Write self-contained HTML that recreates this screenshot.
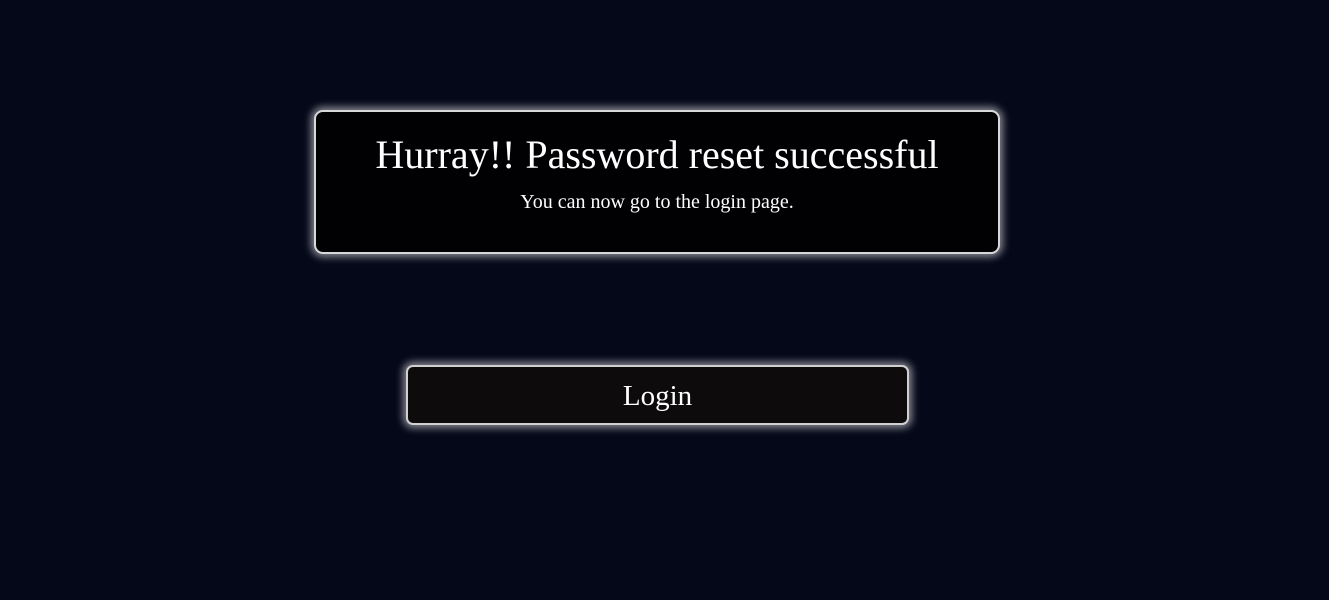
<!DOCTYPE html>
<html><head><style>
html,body{margin:0;padding:0;}
body{width:1329px;height:600px;background:#050818;font-family:"Liberation Serif",serif;color:#fff;position:relative;overflow:hidden;}
.box{position:absolute;left:314px;top:110px;width:682px;height:140px;background:#010103;border:2px solid #d8d8d8;border-radius:9px;box-shadow:0 0 8px 3px rgba(220,220,230,0.6);text-align:center;}
.box h1{margin:0;font-weight:normal;font-size:40px;line-height:46px;padding-top:20px;}
.box p{margin:0;font-size:20px;padding-top:13px;}
.btn{position:absolute;left:406px;top:365px;width:499px;height:56px;background:#0d0b0b;border:2px solid #d0d0d0;border-radius:7px;box-shadow:0 0 8px 3px rgba(220,220,230,0.6);text-align:center;font-size:29px;line-height:58px;}
</style></head><body>
<div class="box"><h1>Hurray!! Password reset successful</h1><p>You can now go to the login page.</p></div>
<div class="btn">Login</div>
</body></html>
